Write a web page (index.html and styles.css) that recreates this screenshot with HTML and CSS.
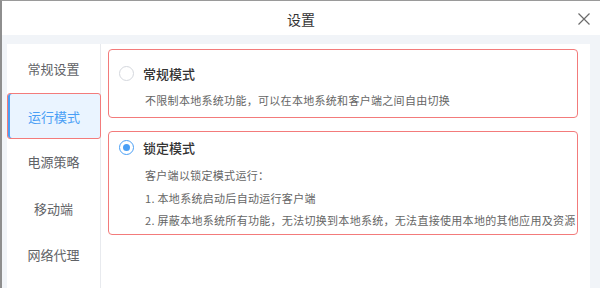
FILE: index.html
```html
<!DOCTYPE html>
<html lang="zh">
<head>
<meta charset="utf-8">
<title>设置</title>
<link rel="stylesheet" href="styles.css">
</head>
<body>
<div class="window">
  <div class="header">
    <span></span>
    <span class="title">设置</span>
    <span class="close-wrap">
      <svg class="close" width="12" height="12" viewBox="0 0 12 12"><path d="M0.5 0.5 L11.5 11.5 M11.5 0.5 L0.5 11.5" stroke="#6b6b6b" stroke-width="1.2" fill="none"/></svg>
    </span>
  </div>
  <div class="body">
    <div class="sidebar">
      <div class="nav-item">常规设置</div>
      <div class="nav-item active">运行模式</div>
      <div class="nav-item">电源策略</div>
      <div class="nav-item">移动端</div>
      <div class="nav-item">网络代理</div>
    </div>
    <div class="content">
      <div class="card card-normal">
        <div class="card-head">
          <span class="radio"></span>
          <span class="card-title">常规模式</span>
        </div>
        <div class="desc first">不限制本地系统功能，可以在本地系统和客户端之间自由切换</div>
      </div>
      <div class="card card-lock">
        <div class="card-head">
          <span class="radio checked"></span>
          <span class="card-title">锁定模式</span>
        </div>
        <div class="desc first">客户端以锁定模式运行：</div>
        <div class="desc">1. 本地系统启动后自动运行客户端</div>
        <div class="desc">2. 屏蔽本地系统所有功能，无法切换到本地系统，无法直接使用本地的其他应用及资源</div>
      </div>
    </div>
  </div>
</div>
</body>
</html>
```

FILE: styles.css
```css
html, body {
  margin: 0;
  padding: 0;
  width: 600px;
  height: 288px;
  overflow: hidden;
  background: #f1f4f8;
  font-family: "Noto Sans CJK SC", "Noto Sans", sans-serif;
}

.window {
  box-sizing: border-box;
  width: 600px;
  height: 288px;
  border-top: 1px solid #9a9a9a;
  border-left: 2px solid #8e8e8e;
  display: flex;
  flex-direction: column;
}

.header {
  height: 34px;
  flex: none;
  background: #ffffff;
  display: grid;
  grid-template-columns: 1fr auto 1fr;
  align-items: center;
}

.title {
  font-size: 14px;
  color: #333333;
  line-height: 20px;
  padding-top: 1px;
}

.close-wrap {
  justify-self: end;
  padding-right: 10px;
  display: flex;
  align-items: center;
  padding-top: 1px;
}

.close {
  display: block;
}

.body {
  flex: 1;
  display: flex;
  padding: 9px 10px 0 5px;
  background: #f1f4f8;
  min-height: 0;
}

.sidebar {
  width: 93px;
  flex: none;
  background: #ffffff;
  border-right: 1px solid #e8eaee;
  padding-top: 2px;
  display: flex;
  flex-direction: column;
}

.nav-item {
  box-sizing: border-box;
  height: 46.5px;
  display: flex;
  align-items: center;
  justify-content: center;
  font-size: 13px;
  color: #606266;
  padding-bottom: 1px;
}

.nav-item.active {
  margin-right: -1px;
  border: 1.5px solid #f37b7b;
  border-radius: 3px;
  background: #eaf4ff;
  color: #4a9ff5;
  box-shadow: inset 2px 0 0 #4a9ff5;
  position: relative;
  z-index: 1;
  padding-bottom: 0;
  padding-top: 2px;
}

.content {
  flex: 1;
  background: #ffffff;
  padding: 5px 12px 0 7px;
  display: flex;
  flex-direction: column;
  gap: 13px;
}

.card {
  border: 1.5px solid #f37b7b;
  border-radius: 4px;
  padding-left: 10px;
}

.card-normal {
  height: 69px;
  box-sizing: border-box;
  padding-top: 13px;
}

.card-lock {
  height: 104px;
  box-sizing: border-box;
  padding-top: 5px;
}

.card-head {
  display: flex;
  align-items: center;
  height: 20px;
}

.radio {
  box-sizing: border-box;
  width: 15px;
  height: 15px;
  border-radius: 50%;
  border: 1px solid #d4d7dd;
  background: #ffffff;
  display: flex;
  align-items: center;
  justify-content: center;
  flex: none;
}

.radio.checked {
  border: 1.5px solid #4a9ff5;
}

.radio.checked::after {
  content: "";
  width: 7px;
  height: 7px;
  border-radius: 50%;
  background: #4a9ff5;
}

.card-title {
  margin-left: 9px;
  font-size: 13px;
  font-weight: 500;
  color: #333333;
}

.desc {
  margin-left: 26px;
  font-size: 11px;
  letter-spacing: 0.3px;
  color: #666666;
  line-height: 22.5px;
  white-space: nowrap;
}

.card-normal .desc.first {
  margin-top: 6px;
  line-height: 22px;
}

.card-lock .desc.first {
  margin-top: 7px;
}
```
